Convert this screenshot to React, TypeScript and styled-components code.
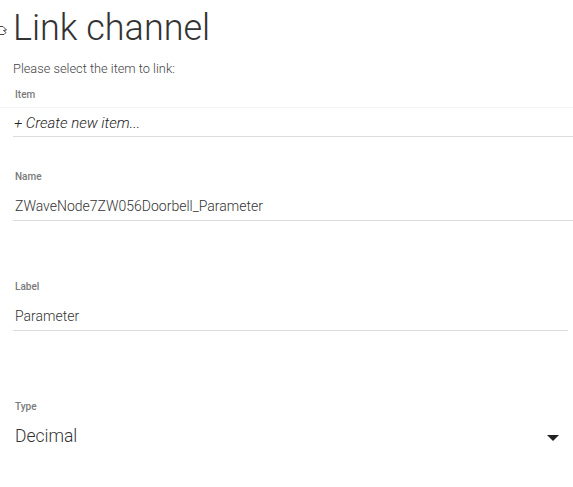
import React from 'react';
import styled, { createGlobalStyle } from 'styled-components';

const GlobalStyle = createGlobalStyle`
  html, body {
    margin: 0;
    padding: 0;
    background: #ffffff;
    font-family: Roboto, 'Noto Sans', sans-serif;
    overflow: hidden;
  }
`;

const Page = styled.div`
  width: 573px;
  height: 487px;
  padding-left: 13px;
  box-sizing: border-box;
  overflow: hidden;
`;

const TitleRow = styled.div`
  position: relative;
  height: 56px;
  display: flex;
  align-items: center;
`;

const Cursor = styled.svg`
  position: absolute;
  left: -13px;
  top: 24px;
`;

const Title = styled.h1`
  margin: 0;
  font-size: 36px;
  line-height: 56px;
  font-weight: 300;
  color: #333333;
`;

const Subtitle = styled.p`
  margin: 4px 0 0;
  font-size: 12.8px;
  line-height: 18px;
  font-weight: 300;
  color: #444444;
`;

const Field = styled.div<{ $top: number; $right?: number }>`
  margin-top: ${({ $top }) => $top}px;
  margin-right: ${({ $right }) => $right ?? 0}px;
`;

const FieldLabel = styled.div`
  padding-left: 2px;
  font-size: 10px;
  line-height: 14px;
  font-weight: 500;
  color: #7a7a7a;
`;

const ItemInput = styled.div`
  margin: 5px 0 0 -13px;
  padding: 4px 0 0 14px;
  height: 25px;
  line-height: 23px;
  border-top: 1px solid #f4f4f4;
  font-size: 15px;
  font-weight: 300;
  font-style: italic;
  color: #222222;
  position: relative;

  &::after {
    content: '';
    position: absolute;
    left: 13px;
    right: 0;
    bottom: 0;
    height: 1px;
    background: #dcdcdc;
  }
`;

const TextInput = styled.div<{ $big?: boolean; $line?: boolean }>`
  margin-top: 8px;
  padding-left: 2px;
  height: 28px;
  display: flex;
  align-items: center;
  justify-content: space-between;
  font-size: ${({ $big }) => ($big ? '17.5px' : '14px')};
  font-weight: 300;
  color: #333333;
  border-bottom: 1px solid ${({ $line }) => ($line ? '#dcdcdc' : 'transparent')};
`;

const Caret = styled.span`
  width: 0;
  height: 0;
  margin-right: 14px;
  margin-top: 4px;
  border-left: 6px solid transparent;
  border-right: 6px solid transparent;
  border-top: 6px solid #222222;
`;

export default function App() {
  return (
    <>
      <GlobalStyle />
      <Page>
        <TitleRow>
          <Cursor width="8" height="12" viewBox="0 0 8 12">
            <path
              d="M0 2.5 L3 2.5 L6.5 6 L3.5 6.5 L6 8.5 L4 10.5 L0 10.5"
              fill="#ffffff"
              stroke="#333333"
              strokeWidth="0.9"
              strokeLinejoin="round"
            />
          </Cursor>
          <Title>Link channel</Title>
        </TitleRow>
        <Subtitle>Please select the item to link:</Subtitle>

        <Field $top={10}>
          <FieldLabel>Item</FieldLabel>
          <ItemInput>+ Create new item...</ItemInput>
        </Field>

        <Field $top={33}>
          <FieldLabel>Name</FieldLabel>
          <TextInput $line>ZWaveNode7ZW056Doorbell_Parameter</TextInput>
        </Field>

        <Field $top={59} $right={5}>
          <FieldLabel>Label</FieldLabel>
          <TextInput $line>Parameter</TextInput>
        </Field>

        <Field $top={69}>
          <FieldLabel>Type</FieldLabel>
          <TextInput $big>
            Decimal
            <Caret />
          </TextInput>
        </Field>
      </Page>
    </>
  );
}
